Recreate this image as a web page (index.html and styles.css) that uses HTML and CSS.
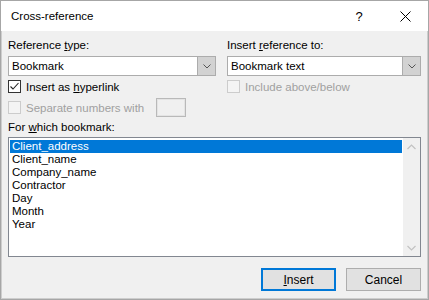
FILE: index.html
```html
<!DOCTYPE html>
<html lang="en">
<head>
  <meta charset="UTF-8">
  <title>Cross-reference</title>
  <link rel="stylesheet" href="styles.css">
</head>
<body>

  <div class="dialog">
    <div class="titlebar">
      <span class="title">Cross-reference</span>
      <span class="title-btn help">?</span>
      <span class="title-btn close">
        <svg width="11" height="11" viewBox="0 0 11 11"><path d="M0.5 0.5 L10.5 10.5 M10.5 0.5 L0.5 10.5" stroke="#000" stroke-width="1" fill="none"/></svg>
      </span>
    </div>

    <div class="body">
      <div class="columns">
        <div class="col">
          <div class="label">Reference <u>t</u>ype:</div>
          <div class="combo">
            <span class="combo-value">Bookmark</span>
            <span class="combo-btn">
              <svg width="8" height="5" viewBox="0 0 8 5"><path d="M0.5 0.5 L4 4 L7.5 0.5" stroke="#555" stroke-width="1" fill="none"/></svg>
            </span>
          </div>
          <div class="check-row">
            <span class="checkbox">
              <svg width="11" height="11" viewBox="0 0 11 11"><path d="M1.5 5.5 L4 8 L9.5 2" stroke="#222" stroke-width="1.1" fill="none"/></svg>
            </span>
            <span>Insert as <u>h</u>yperlink</span>
          </div>
          <div class="check-row sep-row disabled">
            <span class="checkbox"></span>
            <span>Separate numbers with</span>
            <span class="num-box"></span>
          </div>
        </div>

        <div class="col">
          <div class="label">Insert <u>r</u>eference to:</div>
          <div class="combo">
            <span class="combo-value">Bookmark text</span>
            <span class="combo-btn">
              <svg width="8" height="5" viewBox="0 0 8 5"><path d="M0.5 0.5 L4 4 L7.5 0.5" stroke="#555" stroke-width="1" fill="none"/></svg>
            </span>
          </div>
          <div class="check-row disabled">
            <span class="checkbox"></span>
            <span>Include above/below</span>
          </div>
        </div>
      </div>

      <div class="label list-label">For <u>w</u>hich bookmark:</div>
      <div class="listbox">
        <ul class="items">
          <li class="selected">Client_address</li>
          <li>Client_name</li>
          <li>Company_name</li>
          <li>Contractor</li>
          <li>Day</li>
          <li>Month</li>
          <li>Year</li>
        </ul>
        <div class="scrollbar">
          <span class="arrow">
            <svg width="9" height="6" viewBox="0 0 9 6"><path d="M0.5 5 L4.5 1 L8.5 5" stroke="#c2c2c2" stroke-width="1.2" fill="none"/></svg>
          </span>
          <span class="arrow">
            <svg width="9" height="6" viewBox="0 0 9 6"><path d="M0.5 1 L4.5 5 L8.5 1" stroke="#c2c2c2" stroke-width="1.2" fill="none"/></svg>
          </span>
        </div>
      </div>

      <div class="buttons">
        <button class="btn btn-default"><u>I</u>nsert</button>
        <button class="btn">Cancel</button>
      </div>
    </div>
  </div>

</body>
</html>
```

FILE: styles.css
```css
body {
  margin: 0;
  font-family: 'Segoe UI', 'Liberation Sans', Arial, sans-serif;
  font-size: 11.5px;
  color: #000;
  background-color: #fff;
}

.dialog {
  width: 429px;
  height: 300px;
  box-sizing: border-box;
  border: 1px solid #a6a6a6;
  display: flex;
  flex-direction: column;
}

.titlebar {
  height: 30px;
  flex-shrink: 0;
  background-color: #fff;
  display: flex;
  align-items: center;
  padding-left: 10px;
}

.title {
  flex: 1;
  font-size: 11.5px;
}

.title-btn {
  width: 46px;
  height: 30px;
  display: flex;
  align-items: center;
  justify-content: center;
}

.help {
  font-size: 13px;
}

.body {
  flex: 1;
  background-color: #f0f0f0;
  border: 1px solid #cdcdcd;
  border-top: none;
  padding: 7px 6px 0;
}

.columns {
  display: grid;
  grid-template-columns: 208px 194px;
  column-gap: 11px;
}

.label {
  height: 15px;
  line-height: 15px;
}

.combo {
  margin-top: 3px;
  height: 20px;
  box-sizing: border-box;
  border: 1px solid #acacac;
  background-color: #fff;
  display: flex;
}

.combo-value {
  flex: 1;
  padding-left: 3px;
  line-height: 18px;
}

.combo-btn {
  width: 17px;
  background-color: #d2d2d2;
  border-left: 1px solid #acacac;
  display: flex;
  align-items: center;
  justify-content: center;
}

.check-row {
  margin-top: 3px;
  height: 15px;
  display: flex;
  align-items: center;
}

.checkbox {
  width: 13px;
  height: 13px;
  box-sizing: border-box;
  border: 1px solid #333;
  background-color: #fff;
  margin-right: 5px;
  display: flex;
  align-items: center;
  justify-content: center;
}

.check-row.disabled {
  color: #a0a0a0;
}

.check-row.disabled .checkbox {
  border-color: #cccccc;
  background-color: #f4f4f4;
}

.sep-row {
  margin-top: 4px;
  height: 19px;
}

.num-box {
  width: 30px;
  height: 19px;
  box-sizing: border-box;
  border: 1px solid #b9b9b9;
  box-shadow: inset 0 0 0 1px #e4e4e4;
  margin-left: 12px;
}

.list-label {
  margin-top: 3px;
}

.listbox {
  margin-top: 2px;
  height: 120px;
  box-sizing: border-box;
  border: 1px solid #828790;
  background-color: #fff;
  display: flex;
}

.items {
  flex: 1;
  list-style: none;
  margin: 0;
  padding: 2px 1px 0;
}

.items li {
  height: 13px;
  line-height: 13px;
  padding-left: 2px;
}

.items li.selected {
  background-color: #0078d7;
  color: #fff;
}

.scrollbar {
  width: 17px;
  background-color: #f0f0f0;
  display: flex;
  flex-direction: column;
  justify-content: space-between;
}

.arrow {
  height: 17px;
  display: flex;
  align-items: center;
  justify-content: center;
}

.buttons {
  margin-top: 11px;
  display: flex;
  justify-content: flex-end;
  gap: 10px;
}

.btn {
  width: 75px;
  height: 23px;
  box-sizing: border-box;
  font-family: inherit;
  font-size: 12px;
  color: #000;
  background-color: #e1e1e1;
  border: 1px solid #adadad;
  padding: 0;
}

.btn-default {
  border: 2px solid #0078d7;
}
```
